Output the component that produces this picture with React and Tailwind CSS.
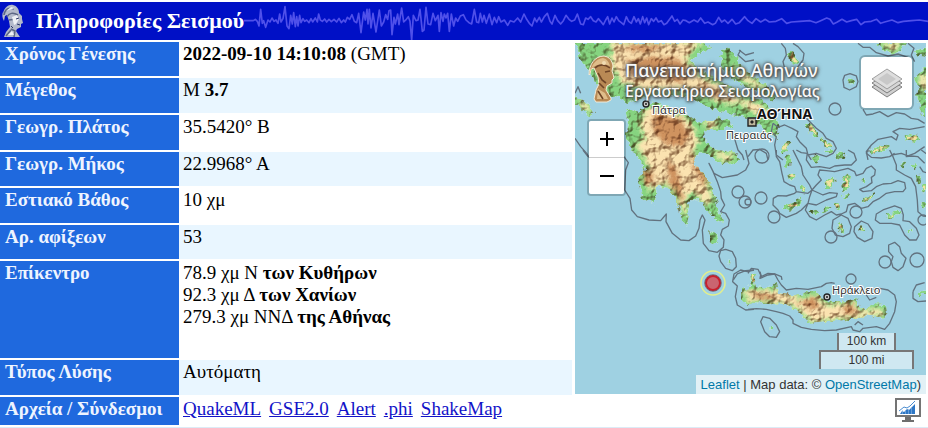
const rows = [
  { label: 'Χρόνος Γένεσης', value: <><b>2022-09-10 14:10:08</b> (GMT)</>, height: 'h-[36px]' },
  { label: 'Μέγεθος', value: <>Μ <b>3.7</b></>, height: 'h-[37px]' },
  { label: 'Γεωγρ. Πλάτος', value: '35.5420° Β', height: 'h-[37px]' },
  { label: 'Γεωγρ. Μήκος', value: '22.9968° Α', height: 'h-[36px]' },
  { label: 'Εστιακό Βάθος', value: '10 χμ', height: 'h-[37px]' },
  { label: 'Αρ. αφίξεων', value: '53', height: 'h-[36px]' },
  {
    label: 'Επίκεντρο',
    value: (
      <>
        78.9 χμ Ν <b>των Κυθήρων</b><br />
        92.3 χμ Δ <b>των Χανίων</b><br />
        279.3 χμ ΝΝΔ <b>της Αθήνας</b>
      </>
    ),
    height: 'h-[99px]'
  },
  { label: 'Τύπος Λύσης', value: 'Αυτόματη', height: 'h-[37px]' }
];

const files = ['QuakeML', 'GSE2.0', 'Alert', '.phi', 'ShakeMap'];

const wave =
  'M12 62L40 62 46 58 52 64 57 78 62 28 67 70 71 62 77 82 84 60 90 66 96 54 102 64 108 60 114 70 119 42 123 66 129 56 135 20 141 78 147 86 152 46 157 72 161 38 166 80 170 50 174 78 179 46 183 68 189 56 194 64 200 60 207 68 213 56 218 66 226 54 232 66 236 42 241 60 247 64 254 57 260 66 267 58 274 65 282 58 290 66 297 55 304 68 311 60 316 66 322 52 329 58 336 44 343 64 350 68 356 40 363 98 371 36 376 60 381 28 384 72 388 28 393 84 399 40 408 96 418 30 424 78 431 66 437 44 443 58 447 32 452 30 456 104 462 52 466 72 473 42 477 74 485 24 491 66 499 58 505 50 510 64 515 120 520 46 528 62 534 60 540 28 547 94 552 90 558 22 564 72 572 74 579 40 586 62 594 46 598 94 603 38 609 64 613 42 618 54 623 40 628 94 634 42 641 78 647 54 653 64 661 48 670 44 678 60 687 68 695 72 703 28 710 66 716 68 721 40 727 66 732 46 739 70 748 42 756 74 763 52 770 68 776 50 783 66 793 60 803 76 811 62 822 66 833 54 842 66 852 42 860 58 868 70 876 78 884 54 890 66 898 52 904 66 913 50 922 40 930 64 936 72 945 46 953 62 962 72 970 62 978 46 987 58 995 64 1004 60 1012 42 1022 72 1030 74 1037 54 1044 58 1052 50 1060 62 1068 66 1075 56 1082 64 1090 74 1097 60 1103 50 1109 72 1116 54 1122 66 1129 50 1136 62 1144 68 1151 74 1159 50 1166 64 1174 70 1182 50 1189 66 1195 56 1201 72 1208 50 1214 68 1220 54 1226 74 1234 56 1241 64 1248 54 1255 66 1264 62 1272 74 1280 70 1296 48 1304 64 1312 58 1320 72 1329 60 1338 62 1348 68 1362 60 1373 66 1382 54 1394 70 1404 66 1418 74 1426 70 1436 52 1445 66 1454 60 1464 70 1476 58 1487 72 1498 68 1514 50 1524 62 1536 70 1548 56 1562 66 1576 58 1588 66 1608 64 1625 56 1640 70 1654 66 1680 64 1710 62 1728 68 1742 62 1760 54 1770 58 1780 72 1792 66 1806 58 1820 66 1834 62 1850 58 1863 74 1874 66 1894 64 1910 58 1922 70 1934 66 1956 60 1974 68 1990 64 2015 62 2038 60 2064 64';

// coastlines of the mainland, the Peloponnese, Euboea and Crete
const mainland = [
  'M575 43L704 43 712 47 700 53 690 60 700 70 718 80 738 90 752 96 764 101 774 112 779 126 777 139 769 135 760 124 748 118 736 115 720 111 706 106 694 100 682 95 668 97 652 97 640 99 626 103 620 96 612 99 602 93 594 82 587 68 580 58 578 51Z',
  'M722 50L730 48 735 56 742 67 754 77 766 84 776 96 772 101 758 92 742 85 728 76 720 64Z',
  'M626 108L638 113 648 104 655 102 668 108 680 111 690 116 700 122 712 122 718 118 728 120 732 126 722 130 710 130 704 132 706 142 716 150 728 151 736 154 741 160 730 164 718 162 708 154 699 152 695 158 693 165 704 173 711 187 716 201 719 213 724 222 716 220 707 210 702 202 694 199 689 203 688 213 686 226 681 217 677 200 669 188 657 186 655 204 649 200 644 201 640 188 638 178 645 170 640 160 631 148 625 137 628 121Z',
  'M748 290L753 277 755 286 768 288 776 282 778 293 795 296 815 291 821 298 831 302 841 302 857 298 860 308 866 309 874 304 886 305 887 313 885 318 871 315 861 316 851 320 828 321 808 323 806 319 798 311 785 304 765 303 748 304 742 300 742 287Z',
  'M575 97L582 100 589 104 594 112 589 116 582 111 580 107 575 104Z',
  'M877 43L906 43 901 51 893 54 884 51Z',
  'M926 68L918 72 914 80 918 88 916 96 921 105 919 113 926 117Z',
  'M926 46L918 50 915 54 926 56Z',
  'M709 231L716 234 718 242 711 243Z'
];

const ridges = [
  'M612 43L700 43 690 52 686 62 700 76 724 88 740 96 734 104 716 100 698 92 680 88 650 90 622 82 612 64Z',
  'M734 66L750 78 766 88 756 86 740 78Z',
  'M738 100L758 104 770 114 756 114Z',
  'M648 108L668 110 690 122 698 142 690 156 702 180 712 198 706 204 696 192 686 194 685 214 681 208 678 192 664 182 650 190 646 180 650 168 644 154 636 146 646 138 640 124Z',
  'M745 291L776 290 798 299 816 296 826 306 856 303 858 312 880 309 884 314 850 317 812 321 796 306 768 300 748 301Z',
  'M704 122L718 122 710 130Z',
  'M712 152L734 156 726 161Z',
  'M581 101L588 106 590 112 584 109Z',
  'M882 44L900 44 894 50Z',
  'M920 76L926 76 926 90 922 88Z'
];

const peaks = [
  'M626 60L658 56 682 60 690 76 680 84 650 74 630 78Z',
  'M700 84L724 94 730 100 708 94Z',
  'M654 114L668 116 682 120 690 136 682 148 664 144 652 130Z',
  'M666 160L676 166 682 186 683 206 678 196 668 182Z',
  'M692 150L700 166 710 186 702 184 692 166Z',
  'M750 293L772 294 776 300 756 299Z',
  'M796 302L816 297 820 306 812 310Z',
  'M842 306L854 304 856 314 844 315Z',
  'M642 170L654 172 652 182 644 184Z',
  'M622 46L664 44 658 50 636 53Z'
];

// small islands: [cx, cy, rx, ry, rotation, hilly]
const islands = [
  [793, 58, 3, 6, -30, true], [850, 81, 3, 2, 0, false], [812, 130, 3, 8, -38, true], [827, 144, 2, 7, -55, true],
  [785, 147, 2, 6, 35, true], [881, 149, 2, 8, 65, true], [912, 138, 8, 3, 12, true], [788, 161, 2, 6, 15, false],
  [792, 176, 3, 3, 0, true], [803, 190, 2, 4, -20, true], [830, 183, 3, 6, 30, true], [846, 183, 3, 8, 10, true],
  [792, 206, 8, 3, -12, true], [798, 201, 2, 2, 0, false], [814, 212, 4, 1, 20, false], [826, 209, 4, 1, -30, false],
  [837, 206, 2, 4, -25, true], [868, 198, 8, 1, -38, true], [841, 227, 2, 5, -20, true], [861, 229, 3, 2, 20, true],
  [891, 216, 4, 2, -20, true], [897, 213, 3, 1, 0, false], [910, 231, 1, 1, 0, false], [816, 158, 2, 4, 10, false],
  [840, 156, 5, 2, 0, false], [829, 151, 4, 1, 0, false], [875, 151, 5, 2, 0, true], [903, 165, 1, 3, 0, false],
  [914, 167, 1, 3, -30, false], [919, 179, 2, 5, -20, false], [924, 188, 2, 4, 0, true], [924, 205, 2, 3, 0, false],
  [863, 180, 1, 1, 0, false], [846, 196, 4, 1, -35, false], [729, 262, 1, 2, 0, false], [771, 329, 1, 1, 0, false],
  [753, 278, 2, 5, 0, true], [922, 293, 4, 1, -25, false]
];

// shoreline buffers, drawn on tiles that are three times as fine as the map
const shores = [
  { at: 'translate(574 40) scale(.3333)', d: 'M495 30L515 45 540 38M500 30L492 45 515 65 540 60M3 295L20 320 38 340 50 360M3 160L12 140 20 160M480 290L492 330 505 345 510 360' },
  { at: 'translate(748 40) scale(.3333)', d: 'M100 10L112 25 115 45 105 65 110 85 120 105 140 100 150 80 165 60 168 40 150 20 135 10M330 10L345 22 365 22 385 38 420 48 450 42 480 52M480 10L498 25 490 45 500 65M345 208L355 225 375 222 395 215 420 230 445 218 470 222 490 235 510 238 530 250M75 250L90 262 110 255 132 265 150 275 145 290 155 305 175 325 180 345 205 340 235 350 255 340 265 325 255 305 235 295 225 280 205 265 190 250 175 235M0 350L15 330 35 328 55 340 60 360M75 250L70 275 85 290 80 315 85 345 105 360M360 360L355 335 370 315 390 298 430 290 445 300 450 285 435 275 455 265 485 268 530 260M430 345L460 340 480 348 500 340 530 320M180 345L190 360M285 120L290 106 306 101 325 108 330 125 325 140 305 150 288 142Z' },
  { at: 'translate(574 150) scale(.3333)', d: 'M150 20L163 38 155 60 152 120 168 145 173 180 190 200 225 210 260 212 277 192 276 215 295 250 320 270 345 272 365 258 375 235 378 210 385 195 393 210 385 240 388 280 405 302 430 307 448 292 450 270 440 255 445 238 463 228 466 210 455 190 440 185 452 165 442 145 440 125 430 95 415 60 405 40 420 70 445 83 490 75 515 60 525 40 515 0M435 318L440 302 455 298 475 305 485 325 487 350 475 362 455 355 440 335ZM478 390L490 372 515 362 540 360M27 0L42 20' },
  { at: 'translate(748 150) scale(.3333)', d: 'M85 0L85 20 95 35 102 70 108 95 125 105 140 110 145 125 165 128 180 130 192 120 185 105 175 90 165 75 160 50 150 30 140 10 135 0M145 0L160 8 178 10 175 30 190 52 215 50 245 55 260 48 290 45 310 45 325 30 318 10 300 0M192 120L205 105 220 90 210 75 215 60 235 62 260 65 300 55 320 65 325 77 345 70 355 55 370 48 382 60 380 75 370 82 372 98 355 110 335 118 345 125 370 122 385 110 405 102 430 100 450 92 470 98 473 115 465 125 440 125 415 130 395 145 375 155 360 170 340 175 320 160 300 165 295 185 280 192 265 195 250 185 230 195 205 210 185 200 172 180 180 160 205 165 235 150 265 140 268 130 245 128 225 135 192 120M192 120L185 140 180 160 160 180 145 190 115 202 95 190 90 180 75 165 76 145 90 137 115 138 140 130 145 125M255 210L280 195 300 205 310 230 305 250 285 260 262 255 252 235ZM320 230L340 213 360 222 375 245 372 265 350 275 328 262 318 245ZM382 210L385 192 405 180 440 168 460 175 466 195 465 212 485 215 505 235 513 255 505 270 485 270 470 255 455 225 430 220 395 220ZM422 285L440 277 455 290 460 310 474 325 465 350 450 362 435 352 430 335 435 320 422 305ZM360 0L355 10 370 22 400 24 425 20 440 10M425 0L435 20 445 45 445 60 470 75 490 85 503 110 508 150 510 185 525 198 540 200M475 0L475 20 490 18 510 20 530 40M540 70L525 65 515 50M0 370L10 355 30 358 38 375 36 385 60 375 80 372 100 380 102 390M540 15L520 0' },
  { at: 'translate(574 270) scale(.3333)', d: 'M540 0L520 5 500 0 480 12 476 35 490 48 484 80 490 105 515 120 540 118' },
  { at: 'translate(748 270) scale(.3333)', d: 'M0 118L25 116 55 118 85 125 105 130 125 138 135 150 135 160 160 172 190 178 230 182 265 180 310 170 315 180 335 185 345 175 385 170 410 178 425 160 440 125 445 95 440 75 420 60 395 55 370 60 355 75 365 90 385 82M36 5L40 20 60 10 80 12 90 30 100 45 115 60 145 55 180 58 220 50 235 40 250 38 260 40M38 155L45 140 65 145 85 165 95 185 85 202 65 200 50 185ZM320 165L330 155 345 165M495 65L505 45 530 38M495 65L495 85 510 95 535 93' }
];

// [cx, cy, r]
const islets = [
  [835, 109, 6], [762, 156, 7], [761, 198, 6], [748, 202, 3], [774, 217, 6], [831, 237, 6], [856, 212, 6],
  [885, 262, 6], [917, 260, 7], [851, 279, 5], [738, 192, 6], [745, 202, 6], [923, 220, 5]
];

const Helmet = ({ className }) => (
  <svg viewBox="0 0 22 34" className={className} aria-hidden="true">
    <path d="M1 11C1 5 6 0 11 1c4 1 6 4 6 8l3 3v3l1 4-2 1v3l-4 2-1 2 4 6H2l2-5 4-5-1-6-2-6-2 1-1 5c-2-3-2-7-1-9z" fill="#b3bacb" />
    <path d="M2 11C3 5 7 3 12 5M5 13c2-4 6-5 11-2M7 16l8-1M9 25l4 2-1 6M4 32l5-6" fill="none" stroke="#5d6885" strokeWidth="1.5" />
    <path d="M4 7l5-4 4 1M10 13l5-2 2 4-3 5-2 1zM6 31l4-4 2 4z" fill="#eef1f5" />
    <path d="M14 15l3-1M15 20l3 1M9 22l2 2" stroke="#293568" strokeWidth="1" />
  </svg>
);

const Bust = () => (
  <svg viewBox="0 0 30 48" className="h-12 w-[30px] shrink-0" aria-hidden="true">
    <path d="M2 20C2 9 8 1 17 1c6 1 8 5 9 10l-1 5 1 3 1 4-2 2v3l-5 3-1 4 5 8v2l-4 2H9l-2-3 2-9 3-6-1-7-4-9-3 1-1 5z" fill="#b98a55" stroke="#f3ead5" strokeWidth="1" />
    <path d="M3 17C5 9 9 4 16 3c4 1 6 4 7 8-6-3-12-2-17 1zM11 34l7 4 3 6H10z" fill="#dfbd8a" />
    <path d="M8 13c4-4 10-4 15 0M11 18l4 7 4 3M12 28l5 5M18 17l5-1M11 36l5 8" fill="none" stroke="#6e4527" strokeWidth="1.6" />
    <circle cx="17" cy="8" r="2" fill="#f1dcb2" />
  </svg>
);

const Terrain = () => (
  <svg viewBox="575 43 351 351" preserveAspectRatio="xMaxYMid slice" className="absolute inset-0 h-full w-full" aria-hidden="true">
    <defs>
      <filter id="relief" x="575" y="43" width="351" height="351" filterUnits="userSpaceOnUse" colorInterpolationFilters="sRGB">
        <feTurbulence type="fractalNoise" baseFrequency=".1" numOctaves="3" seed="8" result="noise" />
        <feColorMatrix in="noise" values="0 0 0 0 0  0 0 0 0 0  0 0 0 0 0  1 0 0 0 0" result="bump" />
        <feDiffuseLighting in="bump" surfaceScale="6" diffuseConstant="1.3" lightingColor="#fff" result="light">
          <feDistantLight azimuth="225" elevation="52" />
        </feDiffuseLighting>
        <feColorMatrix in="light" values=".5 0 0 0 .5  0 .62 0 0 .38  0 0 .7 0 .3  0 0 0 1 0" result="warm" />
        <feBlend in="SourceGraphic" in2="warm" mode="multiply" result="shaded" />
        <feComposite in="shaded" in2="SourceGraphic" operator="in" />
      </filter>
      <filter id="coast" x="575" y="43" width="351" height="351" filterUnits="userSpaceOnUse" colorInterpolationFilters="sRGB">
        <feTurbulence type="fractalNoise" baseFrequency=".2" numOctaves="2" seed="3" />
        <feDisplacementMap in="SourceGraphic" scale="7" xChannelSelector="R" yChannelSelector="G" />
      </filter>
      <filter id="slope" x="575" y="43" width="351" height="351" filterUnits="userSpaceOnUse">
        <feGaussianBlur stdDeviation="2" />
      </filter>
      <clipPath id="land">
        {mainland.map(d => <path key={d} d={d} />)}
      </clipPath>
    </defs>
    <path d="M575 43h351v351H575z" fill="#9fd1e2" />
    <g filter="url(#relief)">
      <g filter="url(#coast)">
        {mainland.map(d => <path key={d} d={d} fill="#86d480" />)}
        <g clipPath="url(#land)">
          <g filter="url(#slope)">
            {ridges.map(d => <path key={d} d={d} fill="#fbe3b0" stroke="#f6efb0" strokeWidth="2" />)}
            {peaks.map(d => <path key={d} d={d} fill="#cf935f" />)}
          </g>
        </g>
        {islands.map(([cx, cy, rx, ry, turn, hilly]) => (
          <g key={`${cx}-${cy}`} transform={`rotate(${turn} ${cx} ${cy})`}>
            <ellipse cx={cx} cy={cy} rx={rx + 0.6} ry={ry + 0.6} fill="#86d480" />
            {hilly && <ellipse cx={cx} cy={cy} rx={rx / 1.5} ry={ry / 1.5} fill="#f3e2a0" />}
          </g>
        ))}
      </g>
    </g>
    <g fill="none" stroke="#62727f" strokeLinejoin="round">
      {shores.map(({ at, d }) => <path key={at} transform={at} d={d} strokeWidth="4" />)}
      {islets.map(([cx, cy, r]) => <circle key={`${cx}-${cy}`} cx={cx} cy={cy} r={r} strokeWidth="1.3" />)}
    </g>
    <g fill="#ddd" stroke="#222">
      <circle cx="646" cy="104" r="3" strokeWidth="1.4" />
      <circle cx="646" cy="104" r=".8" />
      <circle cx="827" cy="297" r="3" strokeWidth="1.4" />
      <circle cx="827" cy="297" r=".8" />
      <path d="M748 118h8v8h-8z" fill="#bdb59c" strokeWidth="1.4" />
      <path d="M751 121h2v2h-2z" fill="#222" />
    </g>
    <g fill="#333" stroke="#fff" strokeWidth="2" paintOrder="stroke" className="font-['Noto_Sans',sans-serif] text-[11px]">
      <text x="652" y="114">Πάτρα</text>
      <text x="726" y="139">Πειραιάς</text>
      <text x="832" y="294">Ηράκλειο</text>
      <text x="757" y="119" fill="#111" className="text-[14px] font-bold">ΑΘΉΝΑ</text>
    </g>
    <circle cx="713" cy="283" r="12" fill="none" stroke="#e3ef8d" strokeWidth="1.5" />
    <circle cx="713" cy="283" r="7" fill="#ca6570" stroke="#c8202c" strokeWidth="2" />
    <circle cx="713" cy="283" r="8.3" fill="none" stroke="#5d2a38" strokeWidth=".6" />
  </svg>
);

const SeismicMap = () => (
  <div className="relative h-[351px] overflow-hidden bg-[#9fd1e2] font-['Liberation_Sans',Arial,sans-serif] text-xs text-[#333]">
    <Terrain />

    <div className="absolute left-3 top-3 flex gap-2 font-['Noto_Sans',sans-serif] font-medium text-[#f8f8f8] [text-shadow:0_0_3px_#444,1px_1px_3px_#444,0_0_5px_#555]">
      <Bust />
      <div className="whitespace-nowrap pt-1">
        <div className="text-[18px] leading-[22px]">Πανεπιστήμιο Αθηνών</div>
        <div className="text-[16px] leading-[20px]">Εργαστήριο Σεισμολογίας</div>
      </div>
    </div>

    <div className="absolute left-3 top-[76px] w-[39px] overflow-hidden rounded border-2 border-[#0003] bg-clip-padding">
      <button aria-label="Zoom in" className="flex h-[37px] w-full items-center justify-center border-b border-[#ccc] bg-white">
        <svg viewBox="0 0 14 14" className="size-3.5" aria-hidden="true"><path d="M7 0v14M0 7h14" stroke="#000" strokeWidth="2" /></svg>
      </button>
      <button aria-label="Zoom out" className="flex h-[36px] w-full items-center justify-center bg-white">
        <svg viewBox="0 0 14 14" className="size-3.5" aria-hidden="true"><path d="M0 7h14" stroke="#000" strokeWidth="2" /></svg>
      </button>
    </div>

    <button aria-label="Layers" className="absolute right-3 top-3 flex size-[55px] items-center justify-center rounded-md border-2 border-[#0003] bg-white bg-clip-padding">
      <svg viewBox="0 0 32 30" className="h-[30px] w-8" aria-hidden="true">
        <path d="M1 19l15-10 15 10-15 10z" fill="#cfcfcf" stroke="#666" strokeWidth=".8" />
        <path d="M1 15l15-10 15 10-15 10z" fill="#d6d6d6" stroke="#666" strokeWidth=".8" />
        <path d="M1 11l15-10 15 10-15 10z" fill="#dedede" stroke="#8a8a8a" strokeWidth=".8" />
        <path d="M7 11l9-6 9 6-9 6z" fill="#c8c8c8" />
      </svg>
    </button>

    <div className="absolute bottom-0 right-0 flex flex-col items-end">
      <div className="mb-[6px] mr-3 flex flex-col items-center text-center leading-[17px]">
        <div className="w-[59px] border-x-2 border-[#777] bg-white/50">100 km</div>
        <div className="w-[95px] border-2 border-b-0 border-[#777] bg-white/50">100 mi</div>
      </div>
      <div className="whitespace-nowrap bg-white/70 px-[5px] text-[13px] leading-[19px]">
        <a href="#leaflet" className="text-[#0078a8]">Leaflet</a> | Map data: © <a href="#osm" className="text-[#0078a8]">OpenStreetMap</a>)
      </div>
    </div>
  </div>
);

const ChartIcon = () => (
  <svg viewBox="0 0 26 26" className="size-[26px]" aria-hidden="true">
    <path d="M1 2h24v17H1z" fill="#fff" stroke="#747474" strokeWidth="2" />
    <path d="M10 20h6v3h3v2H7v-2h3z" fill="#6e6e6e" />
    <path d="M5 17l2-3 2 1 3-3 2 1 6-6v10z" fill="#2e77c5" />
    <path d="M7.5 13v4M10.500 13v4M13.500 12v5M16.500 10v7" stroke="#8fb9e6" strokeWidth=".6" />
    <path d="M4 14l5-4 3 1 3-2 5-5" fill="none" stroke="#4a8cd0" strokeWidth="1" />
  </svg>
);

const App = () => {
  return (
    <main className="bg-white pt-[2px] font-['Liberation_Serif','Times_New_Roman',serif] text-[19px] leading-[22px] text-black">
      <header className="relative flex h-[38px] items-center overflow-hidden bg-[#0010c6]">
        <svg viewBox="0 6 2064 114" preserveAspectRatio="none" className="absolute left-[240px] top-0 h-full w-[688px]" aria-hidden="true">
          <path d={wave} fill="none" stroke="#4f50ea" strokeWidth="5" strokeLinejoin="round" />
        </svg>
        <Helmet className="ml-[2px] h-[34px] w-[22px] shrink-0" />
        <h1 className="relative ml-3 whitespace-nowrap text-[22px] font-bold leading-[32px] text-white">Πληροφορίες Σεισμού</h1>
      </header>

      <table className="w-full table-fixed border-separate border-spacing-0">
        <colgroup>
          <col className="w-[179px]" />
          <col />
          <col className="w-[356px]" />
        </colgroup>
        <tbody>
          {rows.map(({ label, value, height }, i) => (
            <tr key={label} className={height}>
              <th scope="row" className="border-t-2 border-white bg-[#1f69de] px-[5px] pt-px text-left align-top font-bold text-[#eef4ff]">
                {label}
              </th>
              <td className={`border-t-2 border-white px-1 pt-px align-top ${i % 2 ? 'bg-[#e9f6ff]' : 'bg-white'}`}>{value}</td>
              {i === 0 && (
                <td rowSpan={rows.length} className="pl-[3px] pr-[2px] pt-[3px] align-top">
                  <SeismicMap />
                </td>
              )}
            </tr>
          ))}
          <tr className="h-[30px]">
            <th scope="row" className="border-t-2 border-white bg-[#1f69de] px-[5px] pt-px text-left align-top font-bold text-[#eef4ff]">
              Αρχεία / Σύνδεσμοι
            </th>
            <td colSpan={2} className="border-t-2 border-white pl-1 pr-[7px] align-top">
              <div className="flex justify-between">
                <nav className="flex gap-2 pt-px">
                  {files.map(file => (
                    <a key={file} href={`#${file}`} className="text-[#1212c8] underline">{file}</a>
                  ))}
                </nav>
                <a href="#chart" aria-label="Chart"><ChartIcon /></a>
              </div>
            </td>
          </tr>
        </tbody>
      </table>
      <div className="mt-[2px] h-px bg-[#dcebf6]" />
    </main>
  );
};

export default App;
